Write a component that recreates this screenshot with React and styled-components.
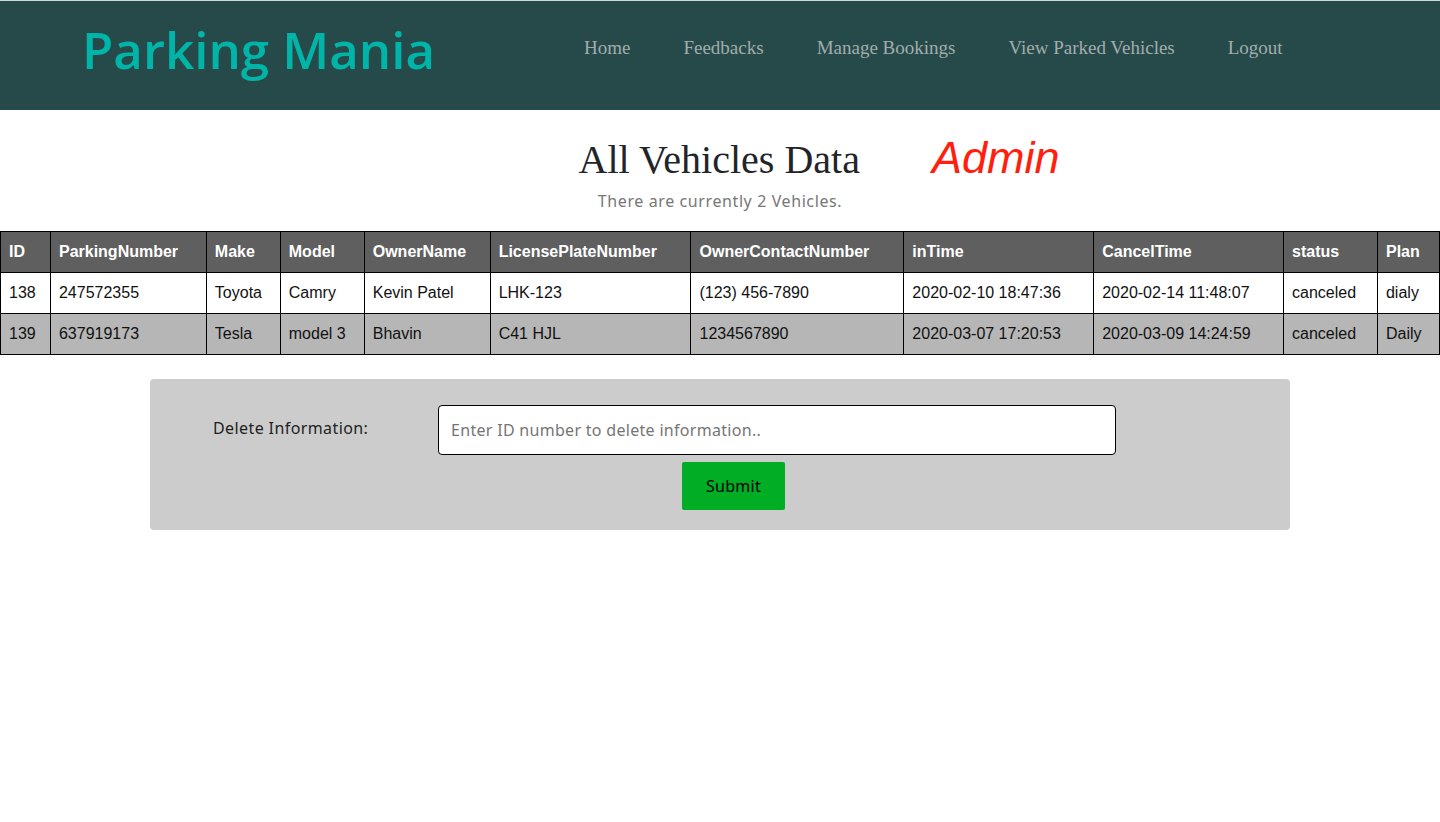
import styled, { createGlobalStyle } from "styled-components";

const GlobalStyle = createGlobalStyle`
  body {
    margin: 0;
    background: #ffffff;
    font-family: "Liberation Sans", Arial, sans-serif;
  }
`;

const Header = styled.header`
  display: flex;
  align-items: center;
  height: 109px;
  border-top: 1px solid #cfd6d6;
  background-color: #264a4a;
  padding-left: 82px;
`;

const Logo = styled.h1`
  margin: 0;
  width: 502px;
  font-family: "Open Sans", sans-serif;
  font-weight: 600;
  font-size: 51px;
  letter-spacing: 0px;
  color: #00b4a8;
  line-height: 1;
  padding-bottom: 12px;
`;

const Nav = styled.nav`
  display: flex;
  gap: 53px;
  padding-bottom: 16px;

  a {
    font-family: "Liberation Serif", "Times New Roman", serif;
    font-size: 19px;
    color: #a2adab;
    text-decoration: none;
  }
`;

const TitleBlock = styled.section`
  display: flex;
  flex-direction: column;
  align-items: center;
  padding-top: 22px;
`;

const TitleRow = styled.div`
  display: flex;
  align-items: baseline;
  gap: 72px;
  padding-left: 198px;
`;

const Title = styled.h2`
  margin: 0;
  font-family: "Liberation Serif", "Times New Roman", serif;
  font-weight: 400;
  font-size: 40px;
  color: #212529;
`;

const Role = styled.span`
  font-family: "Liberation Sans", Arial, sans-serif;
  font-style: italic;
  font-size: 45px;
  color: #ff1f0f;
`;

const Count = styled.p`
  margin: 6px 0 0;
  font-family: "Noto Sans", sans-serif;
  font-size: 16px;
  letter-spacing: 0.6px;
  color: #777777;
`;

const Table = styled.table`
  width: 100%;
  margin-top: 19px;
  border-collapse: collapse;
  font-family: "Liberation Sans", Arial, sans-serif;
  font-size: 16px;

  th,
  td {
    border: 1px solid #000;
    height: 40px;
    padding: 0 8px;
    text-align: left;
    white-space: nowrap;
  }

  th {
    background: #5f5f5f;
    color: #ffffff;
    font-weight: 700;
  }

  td {
    color: #111;
  }

  tbody tr:nth-child(even) td {
    background: #b6b6b6;
  }
`;

const Card = styled.form`
  width: 1140px;
  margin: 24px auto 0;
  box-sizing: border-box;
  background: #cccccc;
  border-radius: 4px;
  padding: 26px 0 20px;
  font-family: "Noto Sans", sans-serif;
  font-size: 16px;
`;

const FieldRow = styled.div`
  display: grid;
  grid-template-columns: 288px 678px;
  align-items: start;
`;

const Label = styled.label`
  padding: 12px 0 0 63px;
  letter-spacing: 0.4px;
  color: #222;
`;

const Input = styled.input`
  box-sizing: border-box;
  height: 50px;
  width: 100%;
  border: 1px solid #000;
  border-radius: 4px;
  padding: 0 12px;
  font-family: "Noto Sans", sans-serif;
  font-size: 16px;
  letter-spacing: 0.3px;
  background: #fff;

  &::placeholder {
    color: #757575;
  }
`;

const ButtonRow = styled.div`
  display: flex;
  justify-content: center;
  padding-left: 27px;
  margin-top: 7px;
`;

const Submit = styled.button`
  width: 103px;
  height: 48px;
  border: none;
  border-radius: 2px;
  background: #00ad24;
  color: #000;
  font-family: "Noto Sans", sans-serif;
  font-size: 16px;
  letter-spacing: 0.3px;
`;

const columns = [
  ["ID", 50],
  ["ParkingNumber", 156],
  ["Make", 74],
  ["Model", 84],
  ["OwnerName", 126],
  ["LicensePlateNumber", 201],
  ["OwnerContactNumber", 213],
  ["inTime", 190],
  ["CancelTime", 190],
  ["status", 94],
  ["Plan", 62],
];

const rows = [
  ["138", "247572355", "Toyota", "Camry", "Kevin Patel", "LHK-123", "(123) 456-7890", "2020-02-10 18:47:36", "2020-02-14 11:48:07", "canceled", "dialy"],
  ["139", "637919173", "Tesla", "model 3", "Bhavin", "C41 HJL", "1234567890", "2020-03-07 17:20:53", "2020-03-09 14:24:59", "canceled", "Daily"],
];

const links = ["Home", "Feedbacks", "Manage Bookings", "View Parked Vehicles", "Logout"];

export default function App() {
  return (
    <>
      <GlobalStyle />
      <Header>
        <Logo>Parking Mania</Logo>
        <Nav>
          {links.map((l) => (
            <a key={l} href="#">
              {l}
            </a>
          ))}
        </Nav>
      </Header>

      <TitleBlock>
        <TitleRow>
          <Title>All Vehicles Data</Title>
          <Role>Admin</Role>
        </TitleRow>
        <Count>There are currently 2 Vehicles.</Count>
      </TitleBlock>

      <Table>
        <colgroup>
          {columns.map(([name, w]) => (
            <col key={name} style={{ width: w }} />
          ))}
        </colgroup>
        <thead>
          <tr>
            {columns.map(([name]) => (
              <th key={name}>{name}</th>
            ))}
          </tr>
        </thead>
        <tbody>
          {rows.map((r) => (
            <tr key={r[0]}>
              {r.map((c, i) => (
                <td key={i}>{c}</td>
              ))}
            </tr>
          ))}
        </tbody>
      </Table>

      <Card onSubmit={(e) => e.preventDefault()}>
        <FieldRow>
          <Label htmlFor="del">Delete Information:</Label>
          <Input id="del" placeholder="Enter ID number to delete information.." />
        </FieldRow>
        <ButtonRow>
          <Submit type="submit">Submit</Submit>
        </ButtonRow>
      </Card>
    </>
  );
}
